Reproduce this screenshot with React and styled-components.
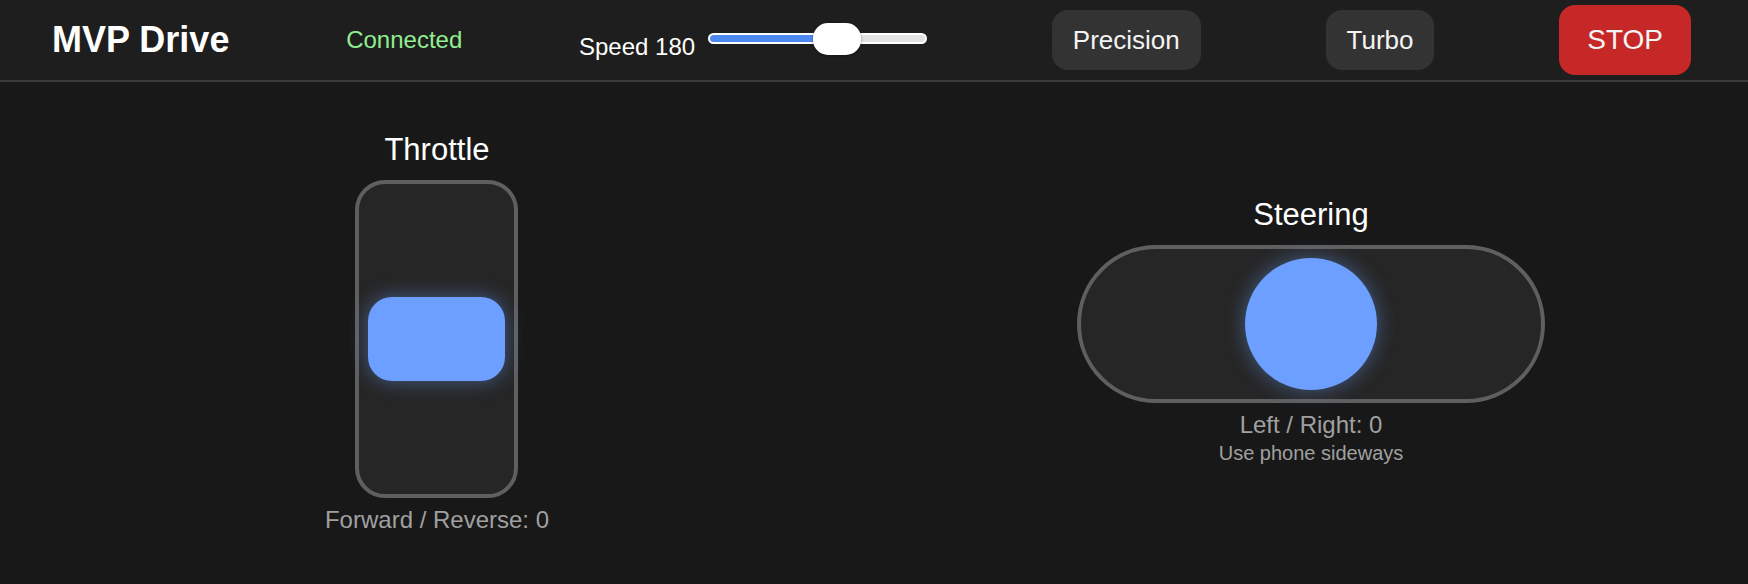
import React, { useState } from 'react'
import styled, { createGlobalStyle } from 'styled-components'

const GlobalStyle = createGlobalStyle`
  html, body {
    margin: 0;
    padding: 0;
    background: #181818;
  }
  body {
    font-family: "Liberation Sans", Arial, Helvetica, sans-serif;
    color: #fff;
  }
`

const Page = styled.div`
  width: 1748px;
  height: 584px;
  display: flex;
  flex-direction: column;
  background: #181818;
  overflow: hidden;
`

const Header = styled.header`
  height: 80px;
  flex-shrink: 0;
  display: flex;
  align-items: center;
  justify-content: space-between;
  padding: 0 57px 0 52px;
  background: #1e1e1e;
  border-bottom: 2px solid #3a3a3a;
`

const Brand = styled.h1`
  margin: 0;
  font-size: 36px;
  font-weight: 700;
  color: #fff;
`

const Status = styled.span`
  font-size: 24px;
  color: ${(p) => (p.online ? '#90ee90' : '#ff8a80')};
`

const SpeedGroup = styled.label`
  display: flex;
  align-items: baseline;
  gap: 13px;
  padding-top: 3px;
`

const SpeedText = styled.span`
  font-size: 24px;
  color: #fff;
`

const Range = styled.input`
  appearance: none;
  -webkit-appearance: none;
  width: 219px;
  height: 32px;
  margin: 0;
  background: transparent;
  &::-webkit-slider-runnable-track {
    box-sizing: border-box;
    height: 11px;
    border-radius: 6px;
    border: 2px solid #fff;
    background: linear-gradient(
      to right,
      #4d8af0 0,
      #4d8af0 var(--fill),
      #e2e2e2 var(--fill),
      #e2e2e2 100%
    );
  }
  &::-webkit-slider-thumb {
    -webkit-appearance: none;
    width: 48px;
    height: 32px;
    margin-top: -12.5px;
    border-radius: 15px;
    background: #fff;
    box-shadow: 0 1px 3px rgba(0, 0, 0, 0.35);
  }
`

const ModeButton = styled.button`
  margin-left: 8px;
  height: ${(p) => (p.danger ? '70px' : '60px')};
  padding: ${(p) => (p.danger ? '0 28px' : '0 21px')};
  border: none;
  border-radius: 16px;
  font-family: inherit;
  font-size: ${(p) => (p.danger ? '28px' : '26px')};
  color: #f4f4f4;
  background: ${(p) => (p.danger ? '#c62828' : p.active ? '#4a4a4a' : '#333333')};
  cursor: pointer;
`

const Main = styled.main`
  flex: 1;
  display: grid;
  grid-template-columns: 1fr 1fr;
  align-items: center;
  justify-items: center;
`

const Control = styled.section`
  display: flex;
  flex-direction: column;
  align-items: center;
  margin-bottom: ${(p) => (p.lift ? '5px' : '0')};
`

const Title = styled.h2`
  margin: 0 0 12px;
  font-size: 31px;
  font-weight: 400;
  color: #fff;
`

const Track = styled.div`
  box-sizing: border-box;
  display: flex;
  align-items: center;
  justify-content: center;
  width: ${(p) => (p.vertical ? '163px' : '468px')};
  height: ${(p) => (p.vertical ? '318px' : '158px')};
  border: 4px solid #5f5f5f;
  border-radius: ${(p) => (p.vertical ? '30px' : '79px')};
  background: #262626;
`

const Knob = styled.div`
  width: ${(p) => (p.round ? '132px' : '137px')};
  height: ${(p) => (p.round ? '132px' : '84px')};
  border-radius: ${(p) => (p.round ? '50%' : '24px')};
  background: #6c9fff;
  box-shadow: 0 0 20px rgba(108, 159, 255, 0.45);
`

const Readout = styled.div`
  margin-top: 8px;
  font-size: 24px;
  color: #a0a0a0;
`

const Hint = styled.div`
  margin-top: 3px;
  font-size: 20px;
  color: #a0a0a0;
`

export default function App() {
  const [speed, setSpeed] = useState(180)
  const [mode, setMode] = useState(null)
  const min = 60
  const max = 255
  const fill = 11 + ((speed - min) / (max - min)) * 78

  return (
    <Page>
      <GlobalStyle />
      <Header>
        <Brand>MVP Drive</Brand>
        <Status online>Connected</Status>
        <SpeedGroup>
          <SpeedText>Speed {speed}</SpeedText>
          <Range
            type="range"
            min={min}
            max={max}
            value={speed}
            onChange={(e) => setSpeed(Number(e.target.value))}
            style={{ '--fill': `${fill}%` }}
          />
        </SpeedGroup>
        <ModeButton
          active={mode === 'precision'}
          onClick={() => setMode(mode === 'precision' ? null : 'precision')}
        >
          Precision
        </ModeButton>
        <ModeButton
          active={mode === 'turbo'}
          onClick={() => setMode(mode === 'turbo' ? null : 'turbo')}
        >
          Turbo
        </ModeButton>
        <ModeButton danger>STOP</ModeButton>
      </Header>

      <Main>
        <Control>
          <Title>Throttle</Title>
          <Track vertical>
            <Knob />
          </Track>
          <Readout>Forward / Reverse: 0</Readout>
        </Control>

        <Control lift>
          <Title>Steering</Title>
          <Track>
            <Knob round />
          </Track>
          <Readout>Left / Right: 0</Readout>
          <Hint>Use phone sideways</Hint>
        </Control>
      </Main>
    </Page>
  )
}
